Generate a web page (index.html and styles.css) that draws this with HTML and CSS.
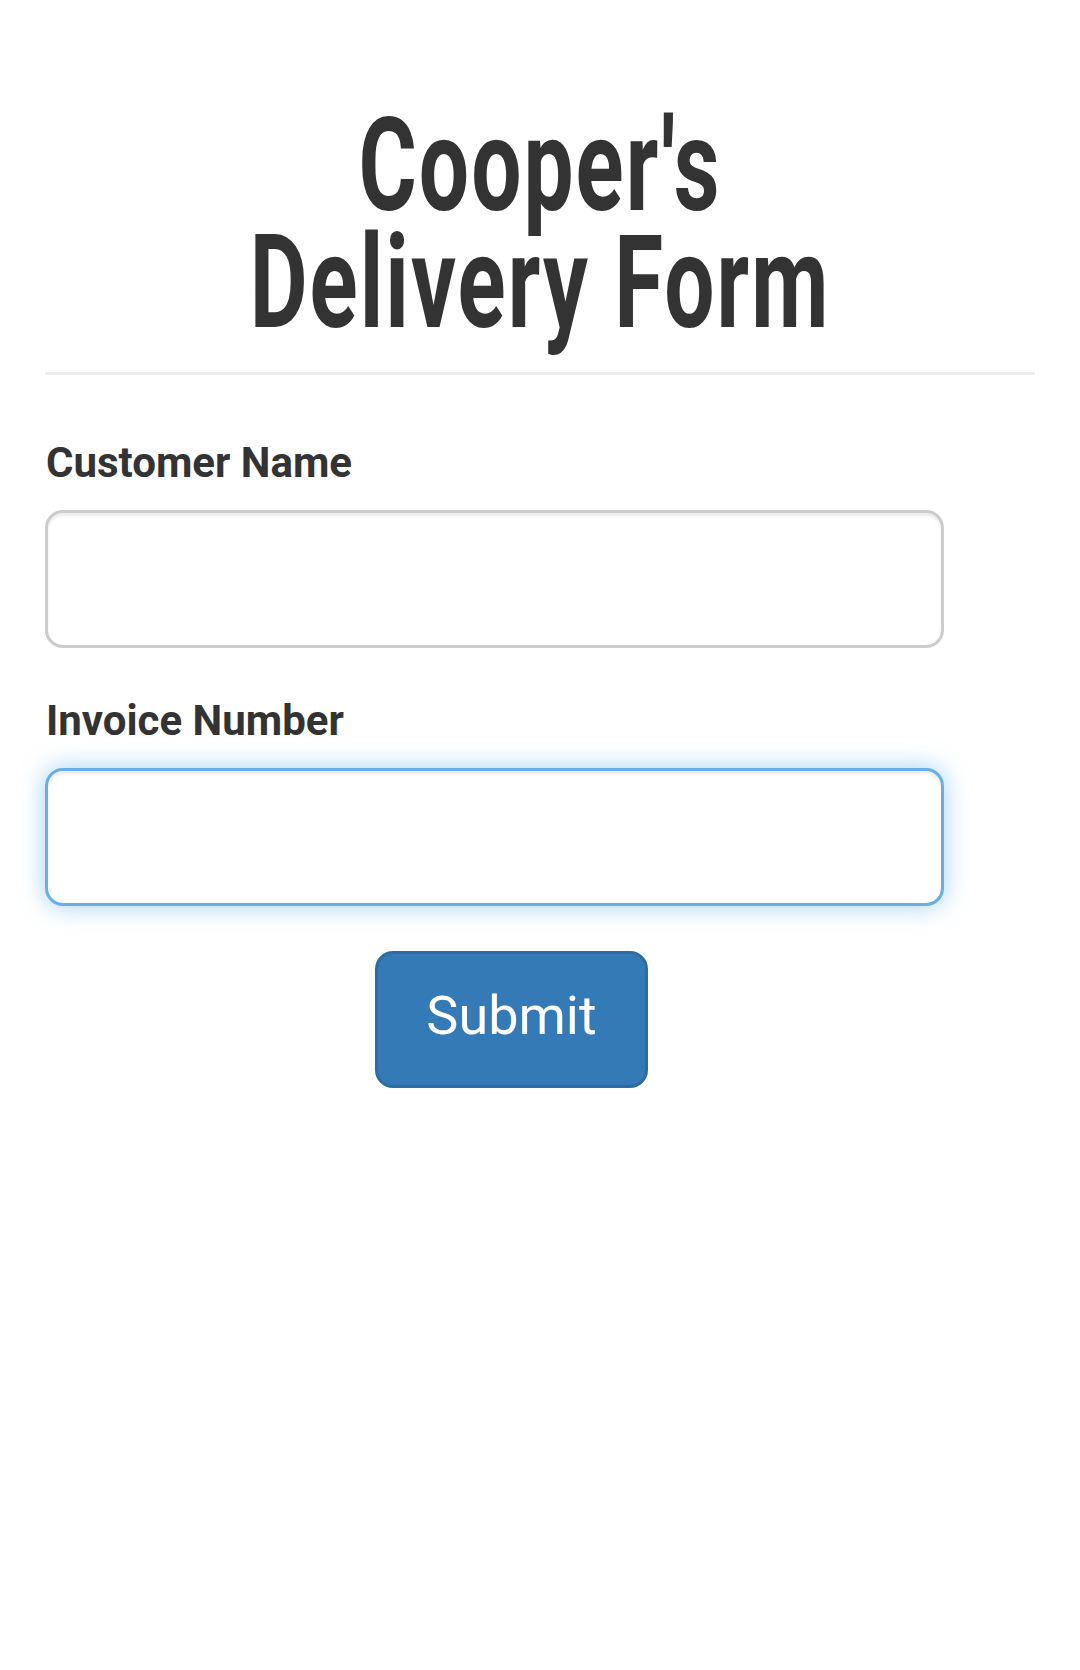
FILE: index.html
```html
<!DOCTYPE html>
<html lang="en">
<head>
<meta charset="utf-8">
<title>Cooper's Delivery Form</title>
<link rel="stylesheet" href="styles.css">
</head>
<body>
<div class="container">
  <h1 class="title"><span class="title-line">Cooper's</span><span class="title-line">Delivery Form</span></h1>
  <hr class="divider">
  <form class="delivery-form">
    <div class="form-group">
      <label class="form-label" for="customer">Customer Name</label>
      <input class="form-control" id="customer" type="text">
    </div>
    <div class="form-group">
      <label class="form-label" for="invoice">Invoice Number</label>
      <input class="form-control is-focused" id="invoice" type="text">
    </div>
    <div class="actions">
      <button class="btn-submit" type="button">Submit</button>
    </div>
  </form>
</div>
</body>
</html>
```

FILE: styles.css
```css
* { box-sizing: border-box; }

html, body {
  margin: 0;
  padding: 0;
  background: #fff;
}

body {
  font-family: Roboto, "Liberation Sans", Arial, sans-serif;
  color: #333;
}

.container {
  padding: 0 45px;
}

.title {
  margin: 107px 0 0;
  text-align: center;
  font-family: Roboto, "Liberation Sans", sans-serif;
  font-weight: 700;
  font-size: 129px;
  line-height: 117px;
  letter-spacing: 3px;
  color: #333;
  transform: scaleX(0.69);
  transform-origin: 50% 50%;
}

.title-line {
  display: block;
  white-space: nowrap;
}

.divider {
  margin: 31px 0 60px;
  border: 0;
  border-top: 3px solid #eee;
  height: 0;
}

.form-group {
  margin-bottom: 45px;
}

.form-label {
  display: block;
  margin: 0 0 19px 1px;
  font-size: 42px;
  line-height: 56px;
  font-weight: 700;
  color: #333;
}

.form-control {
  display: block;
  width: 899px;
  height: 138px;
  padding: 30px 48px;
  font-family: inherit;
  font-size: 54px;
  color: #555;
  background: #fff;
  border: 3px solid #ccc;
  border-radius: 18px;
  box-shadow: inset 0 3px 3px rgba(0, 0, 0, 0.075);
  outline: none;
}

.form-control.is-focused {
  border-color: #66afe9;
  box-shadow: inset 0 3px 3px rgba(0, 0, 0, 0.075), 0 0 24px rgba(102, 175, 233, 0.6);
}

.actions {
  padding-left: 330px;
}

.btn-submit {
  display: block;
  width: 273px;
  height: 137px;
  padding: 0 0 8px;
  font-family: Roboto, "Liberation Sans", sans-serif;
  font-size: 54px;
  font-weight: 400;
  color: #fff;
  background: #337ab7;
  border: 3px solid #2e6da4;
  border-radius: 18px;
  cursor: pointer;
}
```
